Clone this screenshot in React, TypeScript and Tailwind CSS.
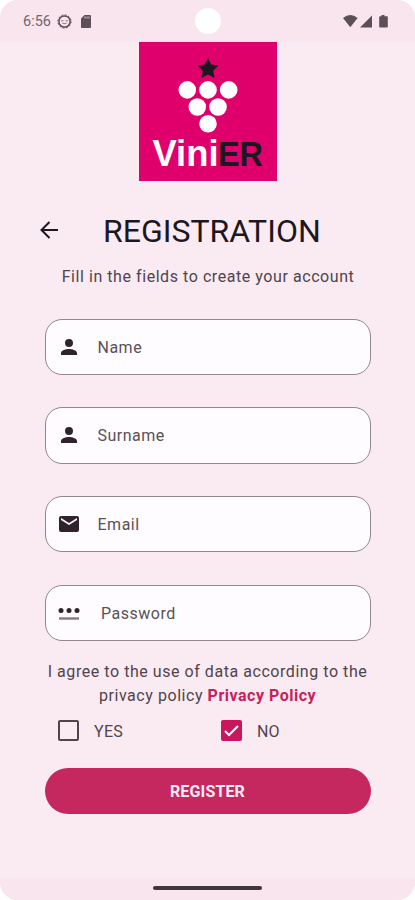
import type { ReactNode } from 'react'

function StatusBar() {
  return (
    <div className="relative flex h-[42px] items-center justify-between bg-[#f9e5ee] pl-[23px] pr-[27px] text-[#5c4f57]">
      <div className="flex items-center">
        <span className="w-[34px] pt-[2px] text-[14.5px] leading-none text-[#74666e]">6:56</span>
        <svg className="size-[15px]" viewBox="0 0 15 15" fill="none" stroke="currentColor">
          <circle cx="7.5" cy="7.5" r="5.6" strokeWidth="1.5" />
          <circle cx="7.5" cy="7.5" r="6.6" strokeWidth="1" strokeDasharray="2 1.46" />
          <path d="M4 6.8h2.5M8.5 6.8H11M5.5 9q2 1.4 4 0" strokeWidth="1.1" opacity=".7" />
        </svg>
        <svg className="ml-[9px] h-[13px] w-[10px]" viewBox="0 0 10 13" fill="currentColor">
          <path d="M3.5 0H9a1 1 0 0 1 1 1v11a1 1 0 0 1-1 1H1a1 1 0 0 1-1-1V3.5z" />
          <path d="M4 1.5v2M6 1.5v2M8 1.5v2" stroke="#f9e5ee" strokeWidth=".8" />
        </svg>
      </div>
      <div className="absolute left-[195px] top-[8px] size-[26px] rounded-full bg-white" />
      <svg className="h-[13px] w-[45px]" viewBox="0 0 45 13" fill="currentColor">
        <path d="M0 3Q7.3-3 14.6 3L7.3 12.2z" />
        <path d="M29 .5v12H17z" />
        <path d="M38.5 0h3v1.3H44q.8 0 .8.8v9.6q0 .8-.8.8h-7q-.8 0-.8-.8V2.1q0-.8.8-.8h1.5z" />
      </svg>
    </div>
  )
}

const grapes = [
  [48.3, 47.9], [69, 47.9], [89.7, 47.9],
  [58.3, 65], [79, 65],
  [69, 81.8],
]

function Logo() {
  return (
    <svg className="mx-auto h-[139px] w-[138px]" viewBox="0 0 138 139">
      <rect width="138" height="139" fill="#df006c" />
      <path d="M69 16l3.2 6.6 7.2 1-5.2 5.2 1.3 7.2-6.5-3.5-6.5 3.5 1.3-7.2-5.2-5.2 7.2-1z" fill="#1d1720" />
      {grapes.map(([cx, cy]) => (
        <circle key={`${cx}-${cy}`} cx={cx} cy={cy} r="8.8" fill="white" />
      ))}
      <g fontFamily="Liberation Sans, Arial, sans-serif" fontSize="36">
        <text x="13.5" y="123.8" fontWeight="700" textLength="66" lengthAdjust="spacingAndGlyphs" fill="white">Vini</text>
        <text x="79" y="123.6" fontSize="35" fontWeight="700" textLength="45" lengthAdjust="spacingAndGlyphs" fill="#1d1720">ER</text>
      </g>
    </svg>
  )
}

const PersonIcon = () => (
  <svg className="size-6" viewBox="0 0 24 24" fill="currentColor">
    <path d="M12 12a4 4 0 1 0 0-8 4 4 0 0 0 0 8zm0 2c-2.67 0-8 1.34-8 4v2h16v-2c0-2.66-5.33-4-8-4z" />
  </svg>
)

const MailIcon = () => (
  <svg className="size-6" viewBox="0 0 24 24" fill="currentColor">
    <path d="M20 4H4a2 2 0 0 0-2 2v12a2 2 0 0 0 2 2h16a2 2 0 0 0 2-2V6a2 2 0 0 0-2-2zm0 4l-8 5-8-5V6l8 5 8-5z" />
  </svg>
)

const PasswordIcon = () => (
  <svg className="size-6" viewBox="0 0 24 24" fill="currentColor">
    <circle cx="4" cy="9.5" r="2.5" />
    <circle cx="12" cy="9.5" r="2.5" />
    <circle cx="20" cy="9.5" r="2.5" />
    <path d="M2 16.3h20v2.4H2z" opacity=".6" />
  </svg>
)

function Field({ icon, label, wide }: { icon: ReactNode; label: string; wide?: boolean }) {
  return (
    <div className="flex h-[56.5px] items-center rounded-[17px] border border-[#94858f] bg-[#fefcfe] pl-[11px] text-[#30232c]">
      {icon}
      <span className={`${wide ? 'ml-[20.5px]' : 'ml-[17px]'} pt-[2px] text-base tracking-[0.5px] text-[#5a5157]`}>{label}</span>
    </div>
  )
}

export default function App() {
  return (
    <div className="min-h-screen bg-white">
      <div className="flex h-[900px] w-[415px] flex-col overflow-hidden rounded-[18px] bg-[#faeaf2] font-[Roboto,sans-serif]">
        <StatusBar />
        <Logo />

        <div className="mt-[30px] flex h-10 items-center pl-[40px]">
          <svg className="mb-[2px] size-[18px]" viewBox="0 0 18 18" fill="none" stroke="#1d1720" strokeWidth="2">
            <path d="M18 9H2M9.5 1L1.5 9l8 8" />
          </svg>
          <h1 className="ml-[45px] text-[32px] font-normal leading-10 text-[#1d1720]">REGISTRATION</h1>
        </div>
        <p className="mt-[14px] pl-[1px] text-center text-[16px] leading-6 tracking-[0.56px] text-[#51444c]">
          Fill in the fields to create your account
        </p>

        <form className="mt-[29.5px] flex flex-col gap-[32.2px] px-[44.5px]">
          <Field icon={<PersonIcon />} label="Name" />
          <Field icon={<PersonIcon />} label="Surname" />
          <Field icon={<MailIcon />} label="Email" />
          <Field icon={<PasswordIcon />} label="Password" wide />
        </form>

        <p className="mt-[19px] text-center text-[16px] leading-6 tracking-[0.55px] text-[#51444c]">
          I agree to the use of data according to the
          <br />
          privacy policy <b className="font-bold tracking-[0.5px] text-[#c81e5b]">Privacy Policy</b>
        </p>

        <div className="mt-[12px] flex h-[21px] items-center pl-[58px] text-[16px] text-[#51444c]">
          <div className="flex w-[163px] items-center gap-[15px]">
            <span className="size-[21px] rounded-[2px] border-2 border-[#51434b]" />
            <span className="pt-[2px] tracking-[0.3px]">YES</span>
          </div>
          <div className="flex items-center gap-[15px]">
            <span className="flex size-[21px] items-center justify-center rounded-[2px] bg-[#c8175c]">
              <svg className="size-[17px]" viewBox="0 0 17 17" fill="none" stroke="white" strokeWidth="2">
                <path d="M2 9l4 4 9-9" />
              </svg>
            </span>
            <span className="pt-[2px]">NO</span>
          </div>
        </div>

        <button className="mx-[44.5px] mt-[27px] h-[46px] shrink-0 rounded-full bg-[#c5285f] pt-[2px] text-[16px] font-bold tracking-[0.15px] text-[#fdeaf3]">
          REGISTER
        </button>

        <div className="mt-auto flex h-[22px] justify-center bg-[#f9e5ee] pt-[8px]">
          <div className="h-[4px] w-[109px] rounded-full bg-[#40363b]" />
        </div>
      </div>
    </div>
  )
}
